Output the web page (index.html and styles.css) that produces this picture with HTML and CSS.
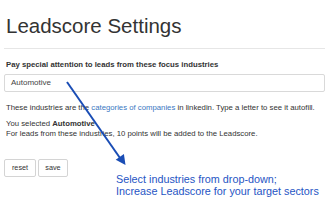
FILE: index.html
```html
<!DOCTYPE html>
<html>
<head>
<meta charset="utf-8">
<link rel="stylesheet" href="styles.css">
</head>
<body>
<div class="page">
  <h1 class="title">Leadscore Settings</h1>
  <hr class="rule">
  <label class="label">Pay special attention to leads from these focus industries</label>
  <div class="input">Automotive</div>
  <p class="help">These industries are the <a class="link">categories of companies</a> in linkedin. Type a letter to see it autofill.</p>
  <p class="status">You selected <b>Automotive</b><br>For leads from these industries, 10 points will be added to the Leadscore.</p>
  <div class="buttons">
    <button class="btn">reset</button>
    <button class="btn">save</button>
  </div>
</div>
<svg class="arrow" width="329" height="205" viewBox="0 0 329 205">
  <line x1="67" y1="82" x2="120" y2="158" stroke="#1a4db5" stroke-width="2"/>
  <polygon points="125.5,165 123.9,153.9 115.7,159.7" fill="#1a4db5"/>
</svg>
<div class="note">Select industries from drop-down;<br>Increase Leadscore for your target sectors</div>
</body>
</html>
```
FILE: styles.css
```css
html, body {
  margin: 0;
  padding: 0;
  background: #fff;
}
body {
  font-family: "Liberation Sans", Arial, sans-serif;
  color: #333;
  position: relative;
  width: 329px;
  height: 205px;
  overflow: hidden;
}
.page {
  padding: 14px 4px 0 4px;
  display: flex;
  flex-direction: column;
  align-items: flex-start;
}
.title {
  margin: 0 0 0 2px;
  font-size: 20.5px;
  line-height: 24px;
  font-weight: normal;
  color: #333;
}
.rule {
  align-self: stretch;
  margin: 10px 0 0 0;
  border: 0;
  border-top: 1px solid #e6e6e6;
  height: 0;
}
.label {
  margin: 11px 0 0 2px;
  font-size: 7.75px;
  line-height: 10px;
  font-weight: bold;
}
.input {
  align-self: stretch;
  box-sizing: border-box;
  margin-top: 4px;
  height: 18px;
  border: 1px solid #d9d9d9;
  border-radius: 2px;
  padding: 0 6px;
  font-size: 8px;
  line-height: 16px;
  color: #444;
}
.help {
  margin: 11px 0 0 2px;
  font-size: 7.75px;
  line-height: 10px;
}
.link {
  color: #3a78c2;
}
.status {
  margin: 6px 0 0 2px;
  font-size: 7.75px;
  line-height: 9.5px;
}
.buttons {
  display: flex;
  gap: 2px;
  margin-top: 21px;
}
.btn {
  box-sizing: border-box;
  height: 17.5px;
  width: 32px;
  padding: 0;
  background: #fff;
  border: 1px solid #d4d4d4;
  border-radius: 2px;
  font-family: "Liberation Sans", Arial, sans-serif;
  font-size: 7.25px;
  color: #333;
}
.btn + .btn {
  width: 30px;
}
.arrow {
  position: absolute;
  left: 0;
  top: 0;
  pointer-events: none;
}
.note {
  position: absolute;
  left: 116px;
  top: 172.5px;
  font-size: 10.8px;
  line-height: 12.6px;
  color: #1f55c4;
  white-space: nowrap;
}
```
